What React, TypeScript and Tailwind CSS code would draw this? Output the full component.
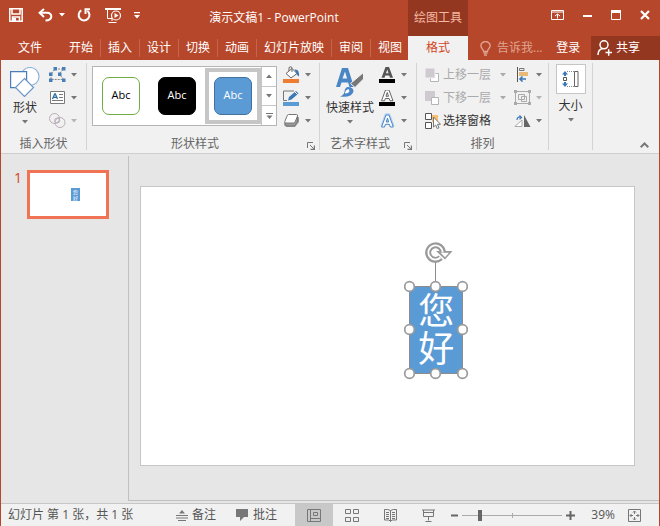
import { useState, type ReactNode } from "react";
import clsx from "clsx";

const tabs = ["开始", "插入", "设计", "切换", "动画", "幻灯片放映", "审阅", "视图"];

const Caret = ({ className }: { className?: string }) => (
  <svg width="6" height="4" viewBox="0 0 6 4" aria-hidden className={clsx("shrink-0", className)}>
    <path d="M0 0h6L3 3.6z" fill="currentColor" />
  </svg>
);

const SaveIcon = () => (
  <svg width="14" height="14" viewBox="0 0 14 14" fill="none" stroke="#fff" strokeWidth="1.5">
    <path d="M.8.8h12.4v12.4H.8z" />
    <path d="M3 1v5h8V1M3.5 13V9h7v4" />
    <path d="M4 10h3v3H4z" fill="#fff" stroke="none" />
  </svg>
);

const UndoIcon = () => (
  <svg width="15" height="14" viewBox="0 0 15 14" fill="none" stroke="#fff" strokeWidth="2">
    <path d="M6 1 1.6 4.8 6 9" />
    <path d="M2 4.8h7c6 0 6 7.6-1.5 7.6" />
  </svg>
);

const RedoIcon = () => (
  <svg width="14" height="14" viewBox="0 0 14 14" fill="none" stroke="#fff" strokeWidth="2">
    <path d="M4.3 2.4a5.4 5.4 0 1 0 6 .3" />
    <path d="M13 1.2H8.5V6" />
  </svg>
);

const PlayShowIcon = () => (
  <svg width="17" height="15" viewBox="0 0 17 15" fill="none" stroke="#fff">
    <path d="M0 1h16" strokeWidth="2" />
    <path d="M2.5 2v8.5H7M7 10.500v2.500M3.500 14.500h8" />
    <circle cx="11" cy="7.500" r="4.500" fill="#b7472a" strokeWidth="1.2" />
    <path d="M9.500 5v5l4-2.500z" fill="#fff" stroke="none" />
  </svg>
);

const ShapesIcon = () => (
  <svg width="30" height="30" viewBox="0 0 30 30" fill="#fff" stroke="#4a7ebb" strokeWidth="1.2">
    <circle cx="20" cy="9.500" r="9" stroke="#8db4dc" />
    <path d="M.6 4.600h16v16H.6z" />
    <path d="m14.500 11.500 9 9-9 9-9-9z" stroke="#6d97c8" />
  </svg>
);

const EditShapeIcon = () => (
  <svg width="17" height="15" viewBox="0 0 17 15" fill="none">
    <path d="M6 2 14.500 2 10 7l5 5.500H2V7z" stroke="#8a8a8a" strokeDasharray="2 1" />
    <path d="M4.500 0h3.500v3.500H4.500zM13 0h3.500v3.500H13zM0 5.500h3.500V9H0zM9 5.500h3.500V9H9zM0 11.500h3.500V15H0zM13 11.500h3.500V15H13z" fill="#4a7ebb" />
  </svg>
);

const TextBoxIcon = () => (
  <svg width="15" height="13" viewBox="0 0 15 13" fill="none" stroke="#7a7a7a">
    <path d="M.5.500h14v12H.5z" fill="#fff" />
    <path d="M9 3.500h4M9 6.500h4M2 9.500h11" />
    <path d="M2.500 8 4.700 3h.6L7.500 8M3.500 6.300h3" stroke="#2e6da4" strokeWidth="1.3" />
  </svg>
);

const MergeIcon = () => (
  <svg width="17" height="15" viewBox="0 0 17 15" fill="none" stroke="#b9adb9">
    <circle cx="5.500" cy="5.500" r="5" />
    <circle cx="11" cy="9.500" r="5" />
    <circle cx="8.200" cy="7.500" r="2.500" />
  </svg>
);

const FillIcon = () => (
  <svg width="17" height="17" viewBox="0 0 17 17" fill="none">
    <path d="M0 13h16v4H0z" fill="#ed7d31" />
    <path d="m3 7.500 6-5 5 5-6 4.500z" fill="#fff" stroke="#666" />
    <path d="M6 5V1.500Q8 0 9 1.500V6" stroke="#666" />
    <path d="M11.500 3.500q5-1 4.500 7-2-1-2.500-3z" fill="#3b78b5" />
  </svg>
);

const OutlineIcon = () => (
  <svg width="17" height="17" viewBox="0 0 17 17" fill="none">
    <path d="M0 13h16v4H0z" fill="#5b9bd5" />
    <path d="M11 2H.5v9.500H4" stroke="#777" />
    <path d="m5 11.500 1-3.500 7-6 2.500 2.500-7 6z" fill="#3b78b5" />
    <path d="m12 3 2.500 2.500" stroke="#fff" />
  </svg>
);

const EffectsIcon = () => (
  <svg width="15" height="13" viewBox="0 0 15 13">
    <path d="M3 3h12v5l-4 5H2L0 11z" fill="#999" />
    <path d="M4.500.500h8q1.500 0 1 1.500l-2 5q-.5 2-2 2h-8Q.3 9 .8 7.500l2-5Q3.300.5 4.500.500z" fill="#fff" stroke="#777" />
    <path d="M1 8.500v2L3 12h7.500l3-4V2.500" fill="none" stroke="#777" />
  </svg>
);

const QuickStyleIcon = () => (
  <svg width="28" height="31" viewBox="0 0 28 31">
    <path d="M6 1h6l6 19h-4.500l-1.400-4.500H5.500L4 20H0zM6.500 11.500h4.600L9 4.500z" fill="#4a86c5" fillRule="evenodd" />
    <path d="M27.500 5.500v6.500L19 20.500l-4.500-4z" fill="#777" stroke="#f1f1f1" />
    <path d="M12 20q5.500 0 5.500 4.500Q15.500 31 4 29.500q4-1.500 4.500-5 .5-4.500 3.500-4.500z" fill="#4a86c5" />
    <path d="M12.500 22q-3.500 1-3.500 4.500 3.500 0 4.500-2.500z" fill="#fff" />
  </svg>
);

interface LetterIconProps {
  variant: "fill" | "outline" | "effect";
}

const LetterIcon = ({ variant }: LetterIconProps) => (
  <svg width="17" height="16" viewBox="0 0 17 16">
    {variant === "effect" && (
      <path d="M3.500 13.500 7.500 2.500h2l4 11M5 9.500h7" fill="none" stroke="#b8d6f2" strokeWidth="4.500" />
    )}
    <path
      d={
        variant === "effect"
          ? "M7 2h3l4.300 12h-3l-.9-2.700H6.400L5.500 14h-3zM7.200 9h2.500L8.500 5z"
          : "M6.500 0h3.500l4 10.800h-3l-.8-2.300H6.300L5.500 10.800h-3zM7 6.300h2.500L8.300 2.500z"
      }
      fill={variant === "fill" ? "#555" : "#fff"}
      stroke={variant === "effect" ? "#4a86c5" : "#666"}
      strokeWidth={variant === "fill" ? 0 : 1}
      fillRule="evenodd"
    />
    {variant !== "effect" && <path d="M0 12h16v4H0z" fill="#000" />}
  </svg>
);

const ForwardIcon = () => (
  <svg width="15" height="14" viewBox="0 0 15 14">
    <path d="M5.500 5.500h8v8h-8z" fill="#fff" stroke="#b5b5b5" />
    <path d="M0 0h10v10H0z" fill="#cfcacf" stroke="#f1f1f1" />
  </svg>
);

const BackwardIcon = () => (
  <svg width="15" height="14" viewBox="0 0 15 14">
    <path d="M0 0h10v10H0z" fill="#cfcacf" />
    <path d="M6.500 6.500h7v7h-7z" fill="#fff" stroke="#b5b5b5" />
  </svg>
);

const SelectionIcon = () => (
  <svg width="16" height="16" viewBox="0 0 16 16" fill="#fff" stroke="#555">
    <path d="M.5.500h6v6h-6zM.5 9.500h6v6h-6z" />
    <path d="M7 2h6v7H7z" fill="#f5c071" stroke="none" />
    <path d="M8.500 4v10l2.200-2 1.500 3.500 1.800-.8-1.500-3.400h3z" stroke="#777" />
  </svg>
);

const AlignIcon = () => (
  <svg width="14" height="15" viewBox="0 0 14 15" fill="none">
    <path d="M1.500 0v15" stroke="#555" />
    <path d="M3.500 1.500H8v2H3.500z" stroke="#777" />
    <path d="M3 5h9v4H3z" fill="#e8b978" />
    <path d="M10 12H4M6.500 9.500 4 12l2.500 2.500" stroke="#3b78b5" strokeWidth="1.600" />
  </svg>
);

const GroupIcon = () => (
  <svg width="17" height="15" viewBox="0 0 17 15" fill="none" stroke="#aaa">
    <path d="M3 1.500h11M3 13.500h11M1.500 3v9M15.500 3v9" />
    <path d="M4.500 4.500h6v5h-6zM7.500 6.500h5v5h-5z" />
    <path d="M0 0h3v3H0zM14 0h3v3h-3zM0 12h3v3H0zM14 12h3v3h-3z" fill="#aaa" stroke="none" />
  </svg>
);

const RotateIcon = () => (
  <svg width="17" height="12" viewBox="0 0 17 12" fill="none">
    <path d="M.8 11.500H8V5z" stroke="#aaa" fill="#fff" />
    <path d="M10 0v12h6.500z" fill="#666" />
    <path d="M3 5q0-3.500 4-3M5.500.500l2 2-2 1.800" stroke="#3b78b5" strokeWidth="1.200" />
  </svg>
);

const SizeIcon = () => (
  <svg width="17" height="18" viewBox="0 0 17 18" fill="none">
    <path d="M12.500 1.500h3.500v15h-3.500z" stroke="#666" />
    <path d="M5 1.500h7M5 16.500h7" stroke="#888" strokeDasharray="1 1" />
    <path d="M1.500 7.500h3v3h-3z" stroke="#555" />
    <path d="M0 4.500 3 1l3 3.500H4V6H2V4.500zM0 13.500 3 17l3-3.500H4V12H2v1.500z" fill="#3b78b5" />
  </svg>
);

const BulbIcon = () => (
  <svg width="11" height="15" viewBox="0 0 11 15" fill="none" stroke="#e0a593" strokeWidth="1.300">
    <path d="M3.500 10.500Q3.500 9 2 7.500-.5 4 2.500 1.600q3-2 6 0 3 2.400.5 5.900-1.500 1.500-1.500 3z" />
    <path d="M3.500 12h4M4 14h3" />
  </svg>
);

const PersonIcon = () => (
  <svg width="16" height="16" viewBox="0 0 16 16" fill="none" stroke="#fff" strokeWidth="1.500">
    <circle cx="7" cy="4.800" r="4" />
    <path d="M1 15q0-5.500 4.500-6.500M8.500 12.500H15M11.700 9.200v6.500" />
  </svg>
);

const LauncherButton = ({ label }: { label: string }) => (
  <button aria-label={label} className="absolute right-1 bottom-0 text-[#777]">
    <svg width="8" height="8" viewBox="0 0 8 8" fill="none" stroke="currentColor">
      <path d="M.5 6V.500H6M3 3l4 4" />
      <path d="M7.500 3.500v4h-4" strokeWidth="1.400" />
    </svg>
  </button>
);

interface RibbonGroupProps {
  title: string;
  className?: string;
  launcher?: boolean;
  children: ReactNode;
}

const RibbonGroup = ({ title, className, launcher, children }: RibbonGroupProps) => (
  <section
    aria-label={title}
    className={clsx("relative my-[3px] flex shrink-0 flex-col border-r border-[#d4d4d4]", className)}
  >
    <div className="flex flex-1">{children}</div>
    <div className={clsx("text-center leading-3 text-[#666]", launcher && "pr-4")}>{title}</div>
    {launcher && <LauncherButton label={`${title}设置`} />}
  </section>
);

interface ToolButtonProps {
  label: string;
  icon: ReactNode;
  disabled?: boolean;
}

const ToolButton = ({ label, icon, disabled }: ToolButtonProps) => (
  <button
    aria-label={label}
    disabled={disabled}
    className="flex h-[23px] items-center gap-[5px] text-[#777] disabled:text-[#b5b5b5]"
  >
    <span className="flex w-[17px] justify-center">{icon}</span>
    <Caret />
  </button>
);

interface BigButtonProps {
  label: string;
  icon: ReactNode;
  className?: string;
}

const BigButton = ({ label, icon, className }: BigButtonProps) => (
  <button className={clsx("flex flex-col items-center self-start text-[#333]", className)}>
    <span className="flex h-9 items-center justify-center">{icon}</span>
    <span>{label}</span>
    <Caret className="mt-1 text-[#777]" />
  </button>
);

interface OrderButtonProps {
  label: string;
  icon: ReactNode;
  disabled?: boolean;
}

const OrderButton = ({ label, icon, disabled }: OrderButtonProps) => (
  <button
    disabled={disabled}
    className="flex h-[23px] items-center gap-[2px] text-[#333] disabled:text-[#aaa]"
  >
    <span className="w-4">{icon}</span>
    <span>{label}</span>
    {disabled && <Caret className="ml-[7px]" />}
  </button>
);

const presets = [
  { name: "outline", className: "border-[#70ad47] bg-white text-black" },
  { name: "dark", className: "border-black bg-black text-white" },
  { name: "accent", className: "border-[#41719c] bg-[#5b9bd5] text-white" },
];

const TitleBar = () => (
  <div className="flex h-9 items-start">
    <div className="flex h-[30px] items-center pl-[9px] text-white">
      <button aria-label="保存"><SaveIcon /></button>
      <button aria-label="撤消" className="ml-[15px] flex items-center gap-[6px]">
        <UndoIcon />
        <Caret />
      </button>
      <button aria-label="重复" className="ml-3"><RedoIcon /></button>
      <button aria-label="从头开始" className="ml-[14px]"><PlayShowIcon /></button>
      <button aria-label="自定义快速访问工具栏" className="ml-3">
        <svg width="6" height="7" viewBox="0 0 6 7" fill="#fff">
          <path d="M0 0h6v1.200H0zM0 3h6L3 6.500z" />
        </svg>
      </button>
    </div>
    <h1 className="flex-1 pt-[10px] text-center text-white">演示文稿1 - PowerPoint</h1>
    <div className="h-full w-[60px] bg-[#943720] pt-[10px] text-center text-[#f3b9a4]">
      绘图工具
    </div>
    <div className="flex h-[30px] w-[192px] items-center justify-end gap-[19px] pr-[10px]">
      <button aria-label="功能区显示选项">
        <svg width="13" height="10" viewBox="0 0 13 10" fill="none" stroke="#fff">
          <path d="M.5.500h12v9H.5zM.5 2h12M6.500 8.500V4M4 6l2.500-2L9 6" />
        </svg>
      </button>
      <button aria-label="最小化">
        <svg width="9" height="10" viewBox="0 0 9 10"><path d="M0 5h9v2H0z" fill="#fff" /></svg>
      </button>
      <button aria-label="最大化">
        <svg width="10" height="10" viewBox="0 0 10 10" fill="none" stroke="#fff">
          <path d="M.5.500h9v9h-9z" />
          <path d="M0 1.500h10" strokeWidth="3" />
        </svg>
      </button>
      <button aria-label="关闭">
        <svg width="10" height="10" viewBox="0 0 10 10" stroke="#fff" strokeWidth="2.200">
          <path d="m1 1 8 8M9 1 1 9" />
        </svg>
      </button>
    </div>
  </div>
);

const TabBar = () => (
  <div className="flex h-6 text-white">
    <button className="w-[62px] shrink-0 pr-[2px]">文件</button>
    <nav className="flex flex-1">
      {tabs.map((tab) => (
        <button
          key={tab}
          className="my-[3px] shrink-0 border-r border-[#c4644b] px-[7px] whitespace-nowrap last:border-0 last:pr-0"
        >
          {tab}
        </button>
      ))}
    </nav>
    <button className="w-[60px] bg-[#f1f1f1] text-[#d24726]">格式</button>
    <div className="flex w-[192px]">
      <button className="flex items-center gap-[6px] pl-3 text-[#e0a593]">
        <BulbIcon />
        告诉我...
      </button>
      <button className="flex-1 pl-[3px] text-center">登录</button>
      <button className="flex w-[69px] items-center gap-[3px] bg-[#943720] pl-[6px]">
        <PersonIcon />
        共享
      </button>
    </div>
  </div>
);

const Ribbon = () => {
  const [preset, setPreset] = useState("accent");

  return (
    <div className="flex h-[94px] border-b border-[#cfcfcf] bg-[#f1f1f1]">
      <RibbonGroup title="插入形状" className="w-[86px]">
        <BigButton label="形状" icon={<ShapesIcon />} className="mt-[1px] ml-[9px] w-[30px]" />
        <div className="ml-[9px]">
          <ToolButton label="编辑形状" icon={<EditShapeIcon />} />
          <ToolButton label="文本框" icon={<TextBoxIcon />} />
          <ToolButton label="合并形状" icon={<MergeIcon />} disabled />
        </div>
      </RibbonGroup>

      <RibbonGroup title="形状样式" className="w-[233px]" launcher>
        <div className="mt-[3px] ml-[5px] flex h-[60px] border border-[#b5b5b5] bg-white">
          {presets.map(({ name, className }) => (
            <button
              key={name}
              aria-pressed={preset === name}
              onClick={() => setPreset(name)}
              className={clsx(
                "my-px flex w-14 items-center justify-center border-4",
                preset === name ? "border-[#c6c6c6]" : "border-transparent",
              )}
            >
              <span
                className={clsx(
                  "flex size-[38px] items-center justify-center rounded-[7px] border pb-[3px] text-[11px]",
                  className,
                )}
              >
                Abc
              </span>
            </button>
          ))}
          <div className="flex w-[15px] flex-col divide-y divide-[#c6c6c6] border-l border-[#c6c6c6] text-[#777]">
            <button aria-label="上一行" className="flex flex-1 items-center justify-center">
              <Caret className="rotate-180" />
            </button>
            <button aria-label="下一行" className="flex flex-1 items-center justify-center">
              <Caret />
            </button>
            <button aria-label="其他" className="flex flex-1 items-center justify-center">
              <svg width="7" height="6" viewBox="0 0 7 6" fill="currentColor">
                <path d="M0 0h7v1H0zM.5 2.500h6l-3 3.500z" />
              </svg>
            </button>
          </div>
        </div>
        <div className="ml-[6px]">
          <ToolButton label="形状填充" icon={<FillIcon />} />
          <ToolButton label="形状轮廓" icon={<OutlineIcon />} />
          <ToolButton label="形状效果" icon={<EffectsIcon />} />
        </div>
      </RibbonGroup>

      <RibbonGroup title="艺术字样式" className="w-[97px]" launcher>
        <BigButton label="快速样式" icon={<QuickStyleIcon />} className="mt-[1px] ml-[5px] w-[50px]" />
        <div className="ml-[4px]">
          <ToolButton label="文本填充" icon={<LetterIcon variant="fill" />} />
          <ToolButton label="文本轮廓" icon={<LetterIcon variant="outline" />} />
          <ToolButton label="文本效果" icon={<LetterIcon variant="effect" />} />
        </div>
      </RibbonGroup>

      <RibbonGroup title="排列" className="w-[132px]">
        <div className="ml-2 w-[89px]">
          <OrderButton label="上移一层" icon={<ForwardIcon />} disabled />
          <OrderButton label="下移一层" icon={<BackwardIcon />} disabled />
          <OrderButton label="选择窗格" icon={<SelectionIcon />} />
        </div>
        <div>
          <ToolButton label="对齐" icon={<AlignIcon />} />
          <ToolButton label="组合" icon={<GroupIcon />} disabled />
          <ToolButton label="旋转" icon={<RotateIcon />} />
        </div>
      </RibbonGroup>

      <div className="my-[3px] w-[44px] shrink-0 border-r border-[#d4d4d4]">
        <button className="mt-[1px] flex w-full flex-col items-center text-[#333]">
          <span className="flex size-[30px] items-center justify-center border border-[#c6c6c6] bg-white">
            <SizeIcon />
          </span>
          <span className="mt-1">大小</span>
          <Caret className="mt-1 text-[#777]" />
        </button>
      </div>

      <button aria-label="折叠功能区" className="ml-auto self-end pr-[10px] pb-[5px]">
        <svg width="9" height="6" viewBox="0 0 9 6" fill="none" stroke="#777" strokeWidth="2">
          <path d="M.7 5.200 4.500 1.500l3.800 3.700" />
        </svg>
      </button>
    </div>
  );
};

const handles = [
  [6, 41], [32, 41], [59, 41],
  [6, 84], [59, 84],
  [6, 128], [32, 128], [59, 128],
];

const SelectedShape = () => (
  <div className="absolute top-[99px] left-[54.4%] flex h-[88px] w-[54px] flex-col items-center justify-center border border-[#6b8cae] bg-[#5b9bd5]">
    <p className="w-9 text-[36px] leading-[38px] text-white">您好</p>
    <svg
      width="70"
      height="135"
      viewBox="0 0 70 135"
      fill="none"
      className="absolute -top-[42px] -left-[7px] overflow-visible"
    >
      <path d="M32.500 17v20M6.500 41.500h53v87h-53z" stroke="#8c8c8c" />
      {handles.map(([x, y]) => (
        <circle key={`${x}-${y}`} cx={x + 0.5} cy={y + 0.5} r="4.800" fill="#fff" stroke="#9a9a9a" strokeWidth="1.700" />
      ))}
      {/* Rotation handle */}
      <path d="M37.700 12.700a7.300 7.300 0 1 1 2.100-5.200" stroke="#999" strokeWidth="6" />
      <path d="M33 6h16.500l-7.500 8.500z" fill="#999" />
      <path d="M37.500 12.500a7.100 7.100 0 1 1 2.100-5" stroke="#fff" strokeWidth="1.800" />
      <path d="M37.500 7.800h8.500L42 12.200z" fill="#fff" />
    </svg>
  </div>
);

const Workspace = () => (
  <main className="flex flex-1 bg-[#e6e6e6]">
    <aside className="flex w-[127px] shrink-0 items-start gap-[6px] pt-4 pl-[13px]">
      <span className="w-[7px] text-sm leading-4 text-[#d24726]">1</span>
      <button
        aria-label="幻灯片 1"
        className="flex h-[49px] w-[82px] items-center border-[3px] border-[#f07355] bg-white pl-[41px]"
      >
        <span className="flex h-[13px] w-[9px] flex-col items-center justify-center bg-[#5b9bd5] text-[5px] leading-[6px] text-white">
          <span>您</span>
          <span>好</span>
        </span>
      </button>
    </aside>
    <div className="mt-[2px] mb-[2px] flex-1 border-b border-l border-[#c0c0c0] pt-[30px] pr-6 pb-[34px] pl-[11px]">
      <div className="relative aspect-[495/280] border border-[#c6c6c6] bg-white">
        <SelectedShape />
      </div>
    </div>
  </main>
);

const StatusBar = () => {
  const [zoom, setZoom] = useState(39);
  // 39% sits at 17 on the track
  const position = Math.round((zoom / 39) * 17);

  return (
    <footer className="flex h-[23px] items-center border-t border-[#c6c6c6] bg-[#f1f1f1] text-[#555]">
      <span className="pl-[7px] whitespace-nowrap">幻灯片 第 1 张，共 1 张</span>
      <div className="ml-auto flex h-full items-center">
        <button className="flex items-center gap-1">
          <svg width="12" height="11" viewBox="0 0 12 11" fill="#777">
            <path d="M6 0 9 3.500H3zM0 5h12v1H0zM0 7.500h12v1H0zM2 10h8v1H2z" />
          </svg>
          备注
        </button>
        <button className="ml-5 flex items-center gap-1">
          <svg width="13" height="12" viewBox="0 0 13 12">
            <path d="M0 0h12v8H8l-4 4V8H0z" fill="#777" />
          </svg>
          批注
        </button>
        <button
          aria-label="普通视图"
          aria-pressed
          className="ml-[18px] flex h-full w-[38px] items-center justify-center bg-[#c8c8c8]"
        >
          <svg width="14" height="13" viewBox="0 0 14 13" fill="none" stroke="#777">
            <path d="M.5.500h13v12H.5zM3.500.500v12M3.500 9.500h10M6.500 3.500h4v3h-4z" />
          </svg>
        </button>
        <button aria-label="幻灯片浏览" className="flex w-[38px] justify-center">
          <svg width="14" height="13" viewBox="0 0 14 13" fill="none" stroke="#777">
            <path d="M.5.500h5v4h-5zM8.500.500h5v4h-5zM.5 8.500h5v4h-5zM8.500 8.500h5v4h-5z" />
          </svg>
        </button>
        <button aria-label="阅读视图" className="flex w-[38px] justify-center">
          <svg width="13" height="13" viewBox="0 0 13 13" fill="none" stroke="#777">
            <path d="M.5.500Q4 0 6.500 1.500 9 0 12.500.500v10.500H8L6.500 12.500 5 11H.5zM6.500 1.500v11" />
            <path d="M2 3.500h3M2 5.500h3M2 7.500h3M2 9.500h3M8 3.500h3M8 5.500h3M8 7.500h3M8 9.500h3" />
          </svg>
        </button>
        <button aria-label="幻灯片放映" className="flex w-[38px] justify-center">
          <svg width="13" height="13" viewBox="0 0 13 13" fill="none" stroke="#777">
            <path d="M0 1h13M1.500 1v6.500h10V1M6.500 7.500v4M3.500 12.500h6M1.500 3.500h10" />
          </svg>
        </button>
        <button aria-label="缩小" className="ml-1" onClick={() => setZoom(Math.max(10, zoom - 10))}>
          <svg width="7" height="9" viewBox="0 0 7 9"><path d="M0 3.500h7v2H0z" fill="#666" /></svg>
        </button>
        <div className="relative mx-1 flex h-[11px] w-[100px] items-center">
          <span className="absolute top-[3px] left-1/2 h-[5px] w-px bg-[#aaa]" />
          <input
            type="range"
            aria-label="缩放"
            min={0}
            max={100}
            value={position}
            onChange={(e) => setZoom(Math.round((Number(e.target.value) / 17) * 39))}
            className="relative h-[11px] w-full appearance-none bg-transparent [&::-webkit-slider-runnable-track]:h-px [&::-webkit-slider-runnable-track]:bg-[#aaa] [&::-webkit-slider-thumb]:-mt-[5px] [&::-webkit-slider-thumb]:h-[11px] [&::-webkit-slider-thumb]:w-1 [&::-webkit-slider-thumb]:appearance-none [&::-webkit-slider-thumb]:bg-[#666]"
          />
        </div>
        <button aria-label="放大" onClick={() => setZoom(zoom + 10)}>
          <svg width="9" height="9" viewBox="0 0 9 9">
            <path d="M0 3.500h9v2H0zM3.500 0h2v9h-2z" fill="#666" />
          </svg>
        </button>
        <span className="w-10 text-right">{zoom}%</span>
        <button aria-label="使幻灯片适应当前窗口" className="mr-[18px] ml-[13px]">
          <svg width="13" height="13" viewBox="0 0 13 13" fill="none" stroke="#777">
            <path d="M.5.500h12v12H.5z" />
            <path d="M6.500 2v3M5 3.500 6.500 2 8 3.500M6.500 11V8M5 9.500 6.500 11 8 9.500M2 6.500h3M3.500 5 2 6.500 3.500 8M11 6.500H8M9.500 5 11 6.500 9.500 8" />
          </svg>
        </button>
      </div>
    </footer>
  );
};

export default function App() {
  return (
    <div className="flex min-h-screen flex-col border-x border-b border-[#b7472a] font-['Open_Sans','Noto_Sans_CJK_SC',sans-serif] text-xs leading-4">
      <header className="-mx-px bg-[#b7472a]">
        <TitleBar />
        <TabBar />
      </header>
      <Ribbon />
      <Workspace />
      <StatusBar />
    </div>
  );
}
